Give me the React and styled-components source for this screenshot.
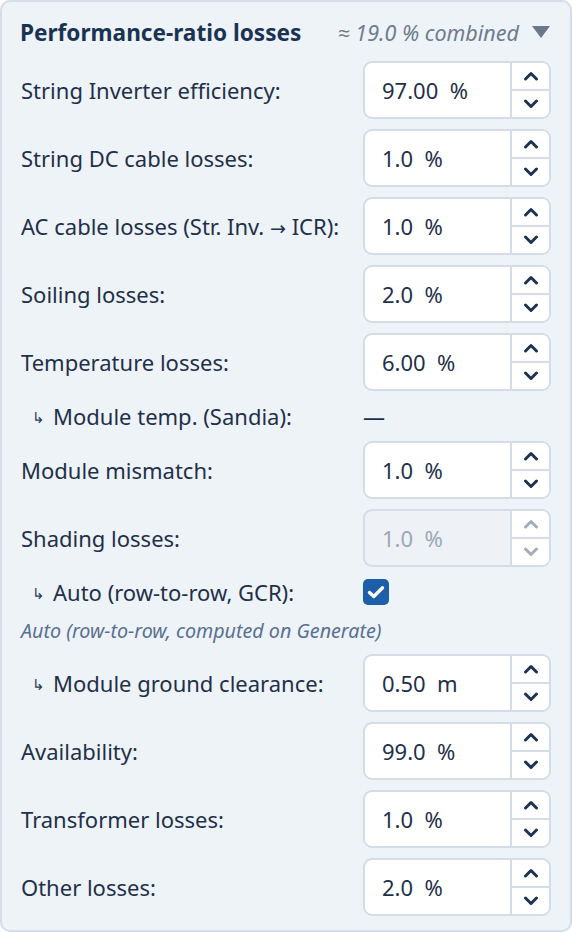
import React from 'react';
import styled, { createGlobalStyle } from 'styled-components';

const GlobalStyle = createGlobalStyle`
  html, body {
    margin: 0;
    padding: 0;
    background: #ffffff;
  }
  body {
    font-family: "Noto Sans", "Open Sans", sans-serif;
  }
`;

const Panel = styled.section`
  box-sizing: border-box;
  width: 572px;
  height: 932px;
  background: #eef3f8;
  border: 2px solid #d4dde8;
  border-radius: 10px;
  padding: 11px 19px 0 18px;
  display: flex;
  flex-direction: column;
  gap: 10px;
  color: #1f3049;
`;

const Header = styled.div`
  display: flex;
  align-items: center;
  justify-content: space-between;
  height: 38px;
`;

const Title = styled.h2`
  margin: 0;
  font-size: 22.6px;
  font-weight: 700;
  color: #1b3352;
`;

const Summary = styled.div`
  display: flex;
  align-items: center;
  gap: 13px;
  font-size: 21.5px;
  font-style: italic;
  color: #6e7c8e;
`;

const Caret = styled.span`
  width: 0;
  height: 0;
  border-left: 9px solid transparent;
  border-right: 9px solid transparent;
  border-top: 12px solid #6b7888;
  margin-right: 1px;
`;

const Row = styled.div`
  display: flex;
  align-items: center;
  justify-content: space-between;
  min-height: ${p => (p.$short ? '30px' : '58px')};
`;

const Label = styled.label`
  font-size: 22px;
  padding-left: ${p => (p.$sub ? '12px' : '1px')};
  white-space: nowrap;
`;

const SubArrow = styled.span`
  display: inline-block;
  font-size: 15px;
  margin-right: 8px;
  vertical-align: 2px;
  color: #2a3a52;
`;

const LongArrow = styled.span`
  font-family: "DejaVu Sans", sans-serif;
  font-size: 19px;
`;

const Control = styled.div`
  width: 188px;
  display: flex;
  align-items: center;
`;

const Dash = styled.span`
  font-size: 22px;
`;

const Spin = styled.div`
  box-sizing: border-box;
  width: 188px;
  height: 58px;
  display: flex;
  border: 2px solid #d3dce7;
  border-radius: 9px;
  background: ${p => (p.$disabled ? '#eef2f7' : '#ffffff')};
  overflow: hidden;
`;

const Value = styled.div`
  flex: 1;
  display: flex;
  align-items: center;
  padding-left: 17px;
  font-size: 22px;
  color: ${p => (p.$disabled ? '#9ba7b5' : '#1f3049')};
  white-space: pre;
`;

const Arrows = styled.div`
  width: 37px;
  display: flex;
  flex-direction: column;
  border-left: 2px solid #d3dce7;
  background: #ffffff;
`;

const ArrowBtn = styled.div`
  flex: 1;
  display: flex;
  align-items: center;
  justify-content: center;
  & + & {
    border-top: 2px solid #d3dce7;
  }
`;

const Check = styled.span`
  width: 26px;
  height: 26px;
  border-radius: 5px;
  background: #1c5ea8;
  display: flex;
  align-items: center;
  justify-content: center;
`;

const Note = styled.div`
  font-size: 19.7px;
  font-style: italic;
  color: #5a7090;
  padding-left: 1px;
  margin: 0;
`;

const Chevron = ({ up, color }) => (
  <svg width="16" height="10" viewBox="0 0 16 10">
    <polyline
      points={up ? '2.5,8 8,2.5 13.5,8' : '2.5,2 8,7.5 13.5,2'}
      fill="none"
      stroke={color}
      strokeWidth="3"
      strokeLinecap="round"
      strokeLinejoin="round"
    />
  </svg>
);

function NumberField({ value, unit, disabled }) {
  const c = disabled ? '#a3aebb' : '#1d3350';
  return (
    <Spin $disabled={disabled}>
      <Value $disabled={disabled}>{`${value}  ${unit}`}</Value>
      <Arrows>
        <ArrowBtn><Chevron up color={c} /></ArrowBtn>
        <ArrowBtn><Chevron color={c} /></ArrowBtn>
      </Arrows>
    </Spin>
  );
}

function Field({ label, value, unit = '%', sub, disabled }) {
  return (
    <Row>
      <Label $sub={sub}>
        {sub && <SubArrow>↳</SubArrow>}
        {label}
      </Label>
      <Control>
        <NumberField value={value} unit={unit} disabled={disabled} />
      </Control>
    </Row>
  );
}

export default function App() {
  return (
    <>
      <GlobalStyle />
      <Panel>
        <Header>
          <Title>Performance-ratio losses</Title>
          <Summary>
            <span>≈ 19.0 % combined</span>
            <Caret />
          </Summary>
        </Header>
        <Field label="String Inverter efficiency:" value="97.00" />
        <Field label="String DC cable losses:" value="1.0" />
        <Field
          label={<>AC cable losses (Str. Inv. <LongArrow>→</LongArrow> ICR):</>}
          value="1.0"
        />
        <Field label="Soiling losses:" value="2.0" />
        <Field label="Temperature losses:" value="6.00" />
        <Row $short>
          <Label $sub><SubArrow>↳</SubArrow>Module temp. (Sandia):</Label>
          <Control><Dash>—</Dash></Control>
        </Row>
        <Field label="Module mismatch:" value="1.0" />
        <Field label="Shading losses:" value="1.0" disabled />
        <Row $short>
          <Label $sub><SubArrow>↳</SubArrow>Auto (row-to-row, GCR):</Label>
          <Control>
            <Check>
              <svg width="18" height="14" viewBox="0 0 18 14">
                <polyline points="2.5,7.5 6.8,11.5 15.5,2.8" fill="none" stroke="#fff" strokeWidth="3.4" strokeLinecap="round" strokeLinejoin="round" />
              </svg>
            </Check>
          </Control>
        </Row>
        <Note>Auto (row-to-row, computed on Generate)</Note>
        <Field label="Module ground clearance:" value="0.50" unit="m" sub />
        <Field label="Availability:" value="99.0" />
        <Field label="Transformer losses:" value="1.0" />
        <Field label="Other losses:" value="2.0" />
      </Panel>
    </>
  );
}
